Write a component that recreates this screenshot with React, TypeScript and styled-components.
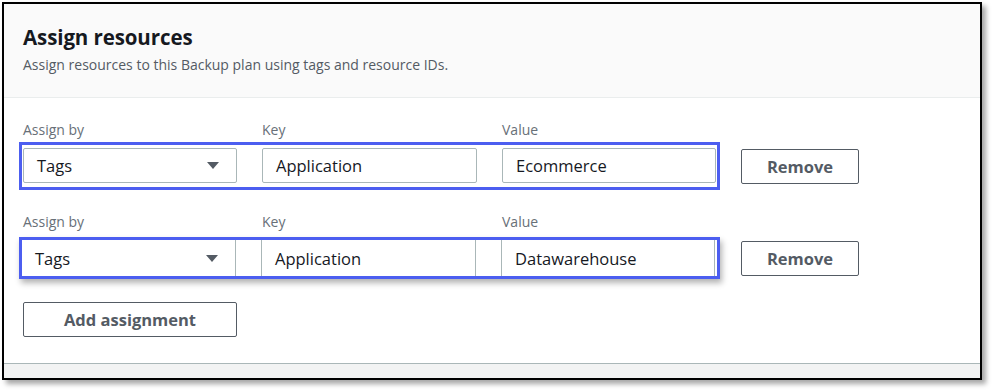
import React from "react";
import styled, { createGlobalStyle, css } from "styled-components";

const Global = createGlobalStyle`
  html, body { margin: 0; padding: 0; background: #ffffff; }
  body { font-family: "Open Sans", "Liberation Sans", sans-serif; }
  * { box-sizing: border-box; }
`;

const Page = styled.div`
  width: 993px;
  height: 391px;
  padding: 2px 0 0 2px;
  background: #ffffff;
`;

const Frame = styled.section`
  width: 980px;
  height: 378px;
  border: 2px solid #000000;
  background: #ffffff;
  box-shadow: 4px 4px 5px rgba(0, 0, 0, 0.35);
  display: flex;
  flex-direction: column;
`;

const Header = styled.header`
  height: 94px;
  background: #fafafa;
  border-bottom: 1px solid #eaeded;
  padding: 19px 0 0 19px;
`;

const Title = styled.h2`
  margin: 0;
  font-size: 20.5px;
  line-height: 28px;
  font-weight: 700;
  color: #16191f;
  letter-spacing: -0.1px;
`;

const Subtitle = styled.p`
  margin: 5px 0 0;
  font-size: 14px;
  line-height: 18px;
  color: #545b64;
`;

const Body = styled.div`
  flex: 1;
  padding: 24px 0 0 19px;
`;

const Row = styled.div<{ $top: number }>`
  margin-top: ${(p) => p.$top}px;
`;

const LabelRow = styled.div`
  display: grid;
  grid-template-columns: 214px 215px 214px;
  column-gap: 25px;
`;

const Label = styled.span`
  font-size: 14px;
  line-height: 16px;
  color: #687078;
`;

const FieldRow = styled.div<{ $gap: number }>`
  display: flex;
  align-items: center;
  margin-top: ${(p) => p.$gap}px;
  margin-left: -4px;
`;

const Highlight = styled.div<{ $flat?: boolean }>`
  display: flex;
  border: 3px solid #4c5ef0;
  width: 701px;
  ${(p) =>
    p.$flat
      ? css`
          height: 42px;
          padding: 0;
          gap: 0;
          background: #ffffff;
          box-shadow: 2px 4px 6px rgba(0, 0, 0, 0.3);
        `
      : css`
          height: 48px;
          padding: 3px 1px 4px 1px;
          gap: 25px;
        `}
`;

const fieldBase = css<{ $flat?: boolean }>`
  height: 35px;
  border: 1px solid #aab7b8;
  border-radius: 2px;
  background: #ffffff;
  display: flex;
  align-items: center;
  padding: 0 13px;
  font-size: 16.5px;
  color: #16191f;
  ${(p) =>
    p.$flat &&
    css`
      height: 36px;
      border-top: none;
      border-bottom: none;
      border-radius: 0;
    `}
`;

const Select = styled.div<{ $flat?: boolean }>`
  ${fieldBase};
  width: 214px;
  justify-content: space-between;
  padding-right: 17px;
  ${(p) => p.$flat && css`border-left: none;`}
`;

const Caret = styled.span`
  width: 0;
  height: 0;
  border-left: 6px solid transparent;
  border-right: 6px solid transparent;
  border-top: 7px solid #545b64;
`;

const Input = styled.div<{ $flat?: boolean; $w: number }>`
  ${fieldBase};
  width: ${(p) => p.$w}px;
`;

const Gap = styled.div`
  width: 25px;
  height: 36px;
  background: #ffffff;
`;

const Button = styled.button<{ $w: number }>`
  width: ${(p) => p.$w}px;
  height: 35px;
  border: 1px solid #545b64;
  border-radius: 2px;
  background: #ffffff;
  font-family: "Open Sans", "Liberation Sans", sans-serif;
  font-size: 16.5px;
  font-weight: 700;
  color: #545b64;
  padding: 0;
`;

const RemoveButton = styled(Button)`
  margin-left: 21px;
`;

const AddButton = styled(Button)`
  margin-top: 23px;
`;

const Footer = styled.footer`
  height: 15px;
  border-top: 1px solid #aab7b8;
  background: #f2f3f3;
`;

type Assignment = { key: string; value: string; flat?: boolean; top: number; gap: number };

const rows: Assignment[] = [
  { key: "Application", value: "Ecommerce", top: 0, gap: 4 },
  { key: "Application", value: "Datawarehouse", flat: true, top: 24, gap: 7 },
];

export default function App() {
  return (
    <>
      <Global />
      <Page>
        <Frame>
          <Header>
            <Title>Assign resources</Title>
            <Subtitle>Assign resources to this Backup plan using tags and resource IDs.</Subtitle>
          </Header>
          <Body>
            {rows.map((r, i) => (
              <Row key={i} $top={r.top}>
                <LabelRow>
                  <Label>Assign by</Label>
                  <Label>Key</Label>
                  <Label>Value</Label>
                </LabelRow>
                <FieldRow $gap={r.gap}>
                  <Highlight $flat={r.flat}>
                    <Select $flat={r.flat}>
                      <span>Tags</span>
                      <Caret />
                    </Select>
                    {r.flat && <Gap />}
                    <Input $flat={r.flat} $w={215}>{r.key}</Input>
                    {r.flat && <Gap />}
                    <Input $flat={r.flat} $w={214}>{r.value}</Input>
                  </Highlight>
                  <RemoveButton $w={118}>Remove</RemoveButton>
                </FieldRow>
              </Row>
            ))}
            <AddButton $w={214}>Add assignment</AddButton>
          </Body>
          <Footer />
        </Frame>
      </Page>
    </>
  );
}
